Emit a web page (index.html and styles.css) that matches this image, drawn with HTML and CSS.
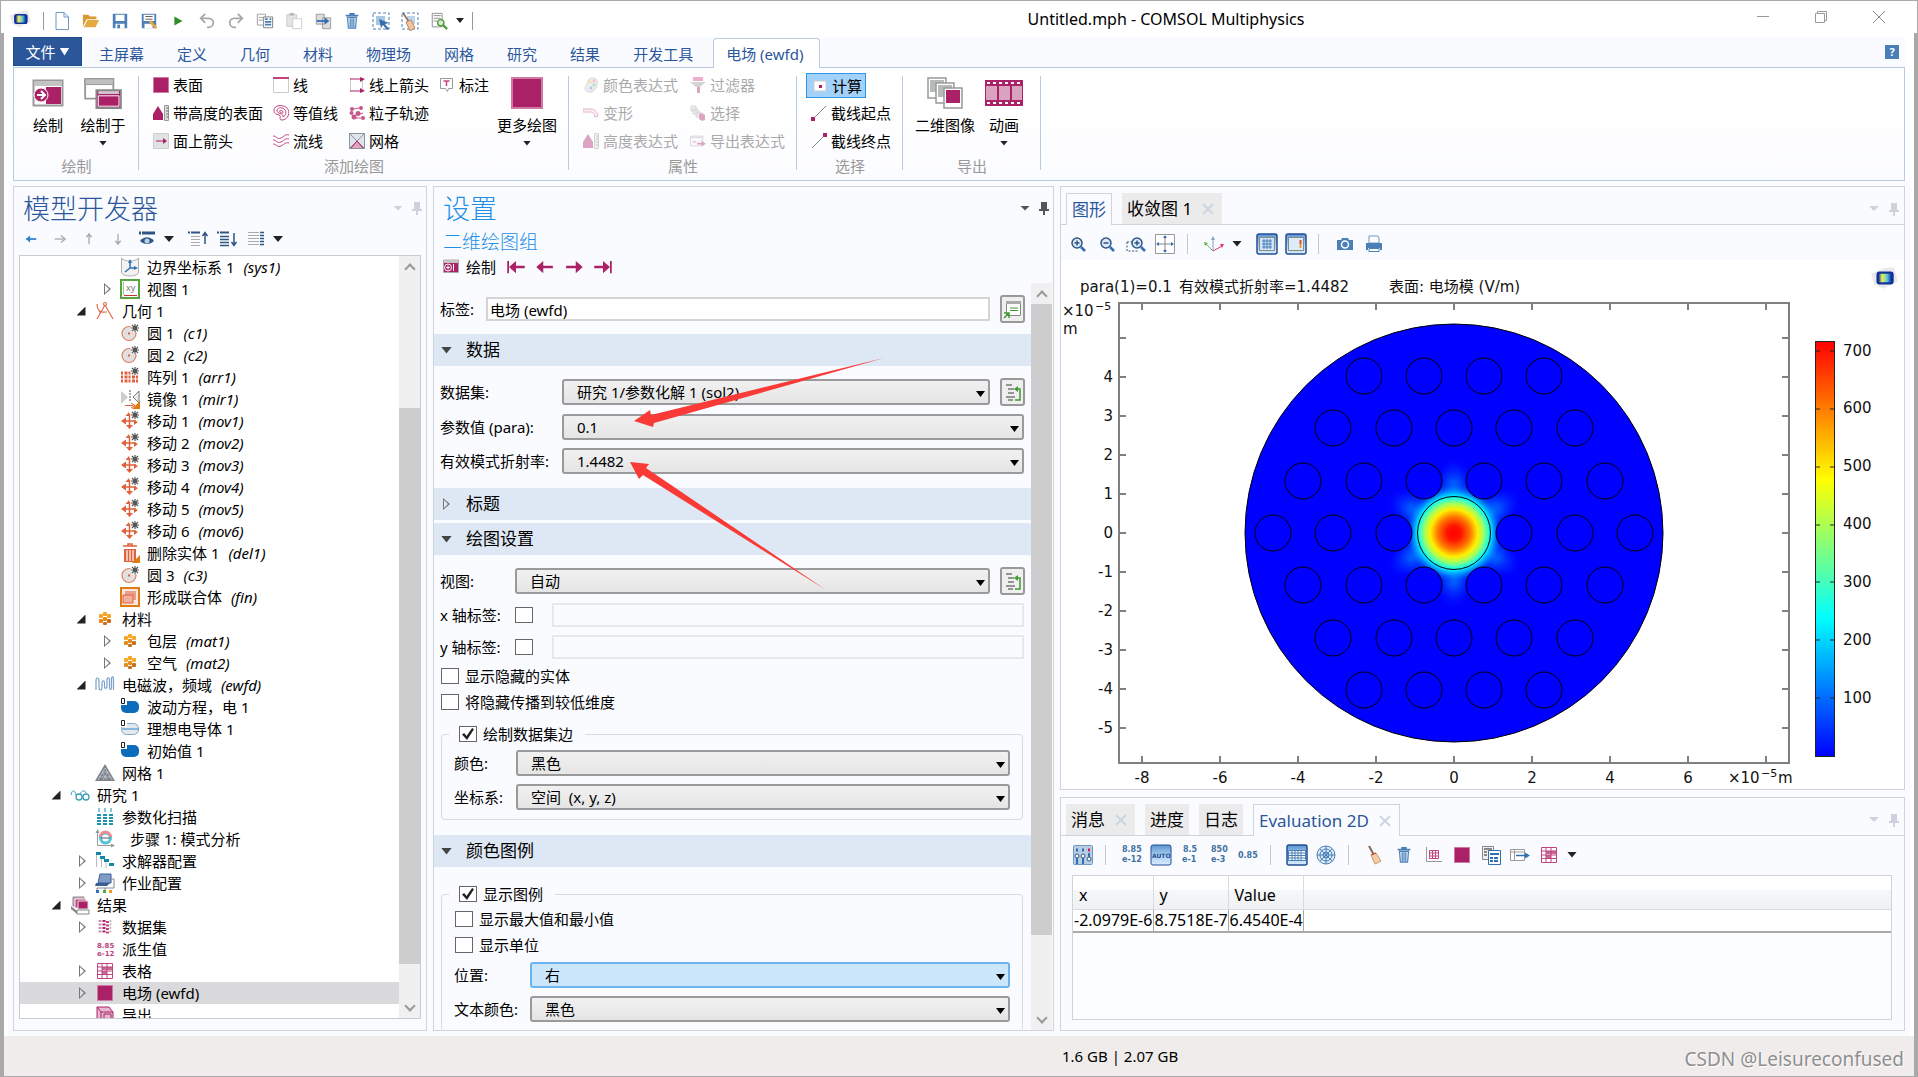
FILE: index.html
```html
<!DOCTYPE html>
<html lang="zh-CN">
<head>
<meta charset="utf-8">
<title>Untitled.mph - COMSOL Multiphysics</title>
<link rel="stylesheet" href="styles.css">
</head>
<body>
<svg class="sprite" aria-hidden="true">
  <defs>
    <linearGradient id="g-logo" x1="0" x2="1"><stop offset="0" stop-color="#12309a"/><stop offset=".25" stop-color="#e8ee5a"/><stop offset=".5" stop-color="#a8dc8a"/><stop offset=".7" stop-color="#47b9e8"/><stop offset="1" stop-color="#0d2a8c"/></linearGradient>
    <linearGradient id="g-pressed" x1="0" x2="0" y1="0" y2="1"><stop offset="0" stop-color="#5c94cf"/><stop offset=".5" stop-color="#a9cdf0"/><stop offset="1" stop-color="#d8ecff"/></linearGradient>
  </defs>
  <symbol id="i-logo" viewBox="0 0 26 20"><path d="M1 6l12-5 9-1 4 13-10 5-3 2-9-4z" fill="#e9e9ec"/><rect x="6" y="4" width="16" height="12" rx="3" fill="#12309a"/><rect x="8" y="6" width="12" height="8" rx="1" fill="url(#g-logo)"/></symbol>
  <symbol id="i-new" viewBox="0 0 20 20"><path d="M4 1.500h8l4.500 4.500v12.500H4z" fill="#fff" stroke="#6f98c4"/><path d="M12 1.500V6h4.500" fill="none" stroke="#6f98c4"/></symbol>
  <symbol id="i-open" viewBox="0 0 20 20"><path d="M1 3h6l2 2h7v3H5L1 16z" fill="#d99a35"/><path d="M6 9h13l-4 8H2z" fill="#e5a941"/></symbol>
  <symbol id="i-save" viewBox="0 0 20 20"><path d="M2 2h16v16H2z" fill="#4a7fb8"/><path d="M5 3h10v7H5zM5 13h10v5H5z" fill="#fff"/><path d="M7 14h3v4H7z" fill="#4a7fb8"/></symbol>
  <symbol id="i-saveas" viewBox="0 0 20 20"><path d="M2 2h16v16H2z" fill="#4a7fb8"/><path d="M4 3h12v7H4zM5 13h9v5H5z" fill="#fff"/><path d="M6 5h8M6 8h8" stroke="#555"/><path d="M11 10l7 8" stroke="#e5a941" stroke-width="3"/></symbol>
  <symbol id="i-run" viewBox="0 0 20 20"><path d="M6 5l9 5-9 5z" fill="#2f8f2a"/></symbol>
  <symbol id="i-undo" viewBox="0 0 20 20"><path d="M4 7h8a4.500 4.500 0 010 10h-2" fill="none" stroke="#a8a8a8" stroke-width="2"/><path d="M8 2L3 7l5 5" fill="none" stroke="#a8a8a8" stroke-width="2"/></symbol>
  <symbol id="i-redo" viewBox="0 0 20 20"><path d="M16 7H8a4.500 4.500 0 000 10h2" fill="none" stroke="#a8a8a8" stroke-width="2"/><path d="M12 2l5 5-5 5" fill="none" stroke="#a8a8a8" stroke-width="2"/></symbol>
  <symbol id="i-copy" viewBox="0 0 20 20"><path d="M1.500 2.500h9v12h-9z" fill="#fff" stroke="#999"/><path d="M3 6h5M3 9h5" stroke="#999"/><path d="M8.500 5.500h10v12h-10z" fill="#fff" stroke="#777"/><path d="M10 8h3M10 11h7M10 14h7M15 8h2" stroke="#4a7fb8" stroke-width="2"/></symbol>
  <symbol id="i-paste" viewBox="0 0 20 20"><path d="M2 3h11v13H2z" fill="#e3e3e3" stroke="#ccc"/><path d="M5 1h5v3H5z" fill="#bbb"/><path d="M8.500 7.500h10v11h-10z" fill="#fff" stroke="#ccc"/></symbol>
  <symbol id="i-dup" viewBox="0 0 20 20"><path d="M2.500 2.500h9v11h-9zM9.500 6.500h9v12h-9z" fill="#ddd" stroke="#999"/><path d="M3 10h12" stroke="#2f6fb4" stroke-width="2"/><path d="M12 6l5 4-5 4z" fill="#2f6fb4"/></symbol>
  <symbol id="i-trash" viewBox="0 0 20 20"><path d="M3 4h14M8 4V2h4v2" fill="none" stroke="#4a7fb8" stroke-width="2"/><path d="M5 6h10l-1 12H6zM8 7v10M10 7v10M12 7v10" fill="#e8f1fa" stroke="#4a7fb8" stroke-width="1.300"/></symbol>
  <symbol id="i-select" viewBox="0 0 20 20"><path d="M2 2h16v16H2z" fill="none" stroke="#4a7fb8" stroke-dasharray="3 2"/><path d="M5 5h9v9H5z" fill="#a9c6e3"/><path d="M8 8l10 4-4 1 4 5-2 1-4-5-2 3z" fill="#3a6ea8"/></symbol>
  <symbol id="i-clearsel" viewBox="0 0 20 20"><path d="M2 2h16v16H2z" fill="none" stroke="#4a7fb8" stroke-dasharray="3 2"/><path d="M7 5h8v8H7z" fill="#bcd3ea"/><path d="M3 2l6 9" stroke="#8a6a52" stroke-width="1.500"/><path d="M6 11l5-2 4 8-5 3z" fill="#f1c49a" stroke="#b98a66"/></symbol>
  <symbol id="i-find" viewBox="0 0 20 20"><path d="M2.500 1.500h11v15h-11z" fill="#fff" stroke="#888"/><path d="M4 4h8M4 7h8M4 10h4" stroke="#888"/><circle cx="12" cy="12" r="3.500" fill="#d6ecd0" stroke="#4f9a3a" stroke-width="1.500"/><path d="M14.500 14.500L19 19" stroke="#4f9a3a" stroke-width="2.500"/></symbol>

  <symbol id="i-plot" viewBox="0 0 32 28"><path d="M1.500 1.500h29v25h-29z" fill="#fff" stroke="#999" stroke-width="2"/><path d="M2 2h28v5H2z" fill="#c4c4c4"/><path d="M14 8h15v17H14z" fill="#ab2168"/><circle cx="9" cy="16" r="7" fill="#ab2168" stroke="#fff"/><path d="M5 16h7M9 12l4 4-4 4" fill="none" stroke="#fff" stroke-width="2"/></symbol>
  <symbol id="i-plotin" viewBox="0 0 42 34"><path d="M2 2h30v21H2z" fill="#fff" stroke="#999" stroke-width="2"/><path d="M2 2h30v6H2z" fill="#c0c0c0" stroke="#999"/><path d="M14 14h26v19H14z" fill="#ab2168" stroke="#888" stroke-width="2"/><path d="M16 15h22v3H16z" fill="#ccc"/><path d="M16 20h22v11H16z" fill="none" stroke="#fff"/></symbol>
  <symbol id="i-plots" viewBox="0 0 16 16"><path d="M.5 1h15v12.500H.5z" fill="#fff" stroke="#aaa"/><path d="M1 1h14v3H1z" fill="#c4c4c4"/><path d="M1 4h14v9H1z" fill="#ab2168"/><circle cx="5" cy="8.500" r="3.500" fill="#ab2168" stroke="#fff"/><path d="M3 8.500h4M5 6.500v4M10.500 5v7" stroke="#fff"/></symbol>
  <symbol id="i-surface" viewBox="0 0 16 16"><path d="M.5.5h15v15H.5z" fill="#ab2168" stroke="#cf7aa5"/></symbol>
  <symbol id="i-height" viewBox="0 0 16 16"><path d="M0 15V9l5-8 5 8v6z" fill="#ab2168"/><path d="M11.500.5h4v15h-4z" fill="#ddd" stroke="#999"/><path d="M13 3h3M13 6h3M13 9h3M13 12h3" stroke="#777"/></symbol>
  <symbol id="i-arrowsurf" viewBox="0 0 16 16"><path d="M.5.5h15v15H.5z" fill="#dfe3e3" stroke="#ccc"/><path d="M3 8h8" stroke="#ab2168"/><path d="M10 5l4 3-4 3z" fill="#ab2168"/></symbol>
  <symbol id="i-line" viewBox="0 0 16 16"><path d="M.5 1h15v14.500H.5z" fill="#fff" stroke="#ccc"/><path d="M0 1h16" stroke="#c0447f" stroke-width="2"/></symbol>
  <symbol id="i-contour" viewBox="0 0 16 16"><g fill="none" stroke="#c0447f"><path d="M1 5c0-5 9-6 13-2s1 12-5 12C5 15 9 11 6 10S1 9 1 5z"/><path d="M4 5c1-3 6-3 8 0s0 6-2 7c1-4-7-3-6-7z"/><path d="M6.500 6c1-1 3-1 3.500 1s-3 1-3.500-1z"/></g></symbol>
  <symbol id="i-stream" viewBox="0 0 16 16"><g fill="none" stroke="#c0447f"><path d="M0 3c4 0 4 4 8 2s4-4 8-3M0 7c4 0 4 4 8 2s4-4 8-3M0 11c4 0 4 4 8 2s4-4 8-3"/></g></symbol>
  <symbol id="i-linearrow" viewBox="0 0 16 16"><path d="M1.500 1v14" stroke="#ccc"/><path d="M13.500 2v12" stroke="#ccc"/><path d="M1 2h11M1 14h11" stroke="#ab2168"/><path d="M11 0l5 2-5 3zM11 11l5 3-5 2z" fill="#ab2168"/></symbol>
  <symbol id="i-particle" viewBox="0 0 16 16"><g fill="#c8568c"><circle cx="3" cy="4" r="2"/><circle cx="2.500" cy="8" r="2"/><circle cx="5" cy="12" r="2.500"/><circle cx="9" cy="8.500" r="2.500"/><circle cx="12" cy="3" r="2"/><circle cx="14" cy="13" r="2"/></g><path d="M5 4l5-1M11 9l3-1M7 13l5 0" stroke="#c8568c"/></symbol>
  <symbol id="i-mesh" viewBox="0 0 16 16"><path d="M.5.5h15v15H.5z" fill="#dfe5ea" stroke="#8a949e"/><path d="M1 15l7-7 7 7z" fill="#e2a5c3"/><path d="M.5.5l15 15M15.500.5l-15 15" stroke="#8a949e"/><path d="M2 15l6-7 6 7" fill="none" stroke="#ab2168"/></symbol>
  <symbol id="i-note" viewBox="0 0 16 16"><path d="M1.500 1.500h12v10h-4l-1 3-2-3h-5z" fill="#fff" stroke="#999"/><path d="M4.500 4h6M7.500 4v5" stroke="#c0447f" stroke-width="1.500"/></symbol>
  <symbol id="i-palette" viewBox="0 0 16 16"><path d="M9 1c5 0 6 3 5 7s-4 8-8 7-5-4-3-6 1-8 6-8z" fill="#d4d4d4" stroke="#999"/><circle cx="7" cy="5" r="1.500" fill="#e9b020"/><circle cx="11" cy="4" r="1.500" fill="#f06a6a"/><circle cx="11" cy="8" r="1.500" fill="#3fc05a"/><circle cx="8" cy="11" r="1.500" fill="#3f78e8"/></symbol>
  <symbol id="i-deform" viewBox="0 0 16 16"><path d="M0 4h8c4 0 6 3 7 7l-3 1c-1-4-2-5-5-5H0z" fill="#f4dbe7" stroke="#c0447f"/></symbol>
  <symbol id="i-filter" viewBox="0 0 16 16"><path d="M3 0h10v4H3z" fill="#d63a86"/><path d="M0 5h16l-6 5H6z" fill="#999"/><path d="M7 10h3v6H7z" fill="#ab2168"/></symbol>
  <symbol id="i-pick" viewBox="0 0 16 16"><path d="M1 1h5v5H1zM3 4h5v5H3zM6 7h5v5H6z" fill="#ddd" stroke="#999"/><path d="M9 9l3-1 3 2v5l-3 1-3-2z" fill="#ab2168"/></symbol>
  <symbol id="i-expr" viewBox="0 0 18 16"><path d="M.5 2.500h14v11H.5z" fill="#f2f2f2" stroke="#999"/><path d="M1 4h13" stroke="#999"/><path d="M3 9h4" stroke="#ab2168"/><path d="M8 11h6" stroke="#ab2168" stroke-width="2"/><path d="M13 8l5 3-5 3z" fill="#ab2168"/></symbol>
  <symbol id="i-calc" viewBox="0 0 16 16"><path d="M2 3h12v10H2z" fill="#fff" stroke="#ccc"/><path d="M7 7h3v3H7z" fill="#ab2168"/></symbol>
  <symbol id="i-cutstart" viewBox="0 0 16 16"><path d="M1 15L15 1" stroke="#888"/><path d="M0 12h4v4H0z" fill="#ab2168"/></symbol>
  <symbol id="i-cutend" viewBox="0 0 16 16"><path d="M1 15L15 1" stroke="#888"/><path d="M12 0h4v4h-4z" fill="#ab2168"/></symbol>
  <symbol id="i-images" viewBox="0 0 38 32"><g fill="#fff" stroke="#999" stroke-width="1.500"><path d="M2 1h18v20H2z"/><path d="M4 3h14v12H4z" fill="#b5bbb9" stroke="none"/><path d="M10 6h18v20H10z"/><path d="M12 8h14v12H12z" fill="#b5bbb9" stroke="none"/><path d="M18 11h18v20H18z"/></g><path d="M20 13h14v13H20z" fill="#ab2168"/></symbol>
  <symbol id="i-film" viewBox="0 0 38 26"><path d="M0 0h38v26H0z" fill="#ab2168"/><path d="M1 6h11v14H1zM14 6h11v14H14zM27 6h10v14H27z" fill="#d9a3bf"/><path d="M2 3h36M2 23h36" stroke="#fff" stroke-width="2" stroke-dasharray="3 3"/></symbol>

  <symbol id="i-left" viewBox="0 0 16 16"><path d="M3 8h11" stroke="currentColor" stroke-width="2"/><path d="M7 4L2 8l5 4z" fill="currentColor"/></symbol>
  <symbol id="i-right" viewBox="0 0 16 16"><path d="M2 8h11" stroke="currentColor" stroke-width="1.500"/><path d="M9 4l5 4-5 4" fill="none" stroke="currentColor" stroke-width="1.500"/></symbol>
  <symbol id="i-up" viewBox="0 0 16 16"><path d="M8 14V3M5 6l3-4 3 4" fill="none" stroke="currentColor" stroke-width="1.500"/></symbol>
  <symbol id="i-down" viewBox="0 0 16 16"><path d="M8 2v11M5 10l3 4 3-4" fill="none" stroke="currentColor" stroke-width="1.500"/></symbol>
  <symbol id="i-eye" viewBox="0 0 18 16"><path d="M1 2h2M4 2h13" stroke="#2f5582" stroke-width="3"/><path d="M2 10c4-5 10-5 14 0-4 4-10 4-14 0z" fill="#2f5582"/><circle cx="9" cy="10" r="2.500" fill="#b8d0ea"/></symbol>
  <symbol id="i-collapse" viewBox="0 0 20 16"><path d="M0 1.500h12" stroke="#2f5582" stroke-width="2" stroke-dasharray="2 1 20"/><path d="M3 5.500h9M3 8.500h9M3 11.500h9M3 14.500h9" stroke="#aaa"/><path d="M17 13V2M14.500 5L17 1.500 19.500 5" fill="none" stroke="#2f5582" stroke-width="1.500"/></symbol>
  <symbol id="i-expand" viewBox="0 0 20 16"><path d="M0 1.500h12" stroke="#2f5582" stroke-width="2" stroke-dasharray="2 1 20"/><path d="M3 5.500h9M3 8.500h9M3 11.500h9M3 14.500h9" stroke="#2f5582" stroke-width="1.500"/><path d="M17 2v12M14.500 11l2.500 3.500 2.500-3.500" fill="none" stroke="#2f5582" stroke-width="1.500"/></symbol>
  <symbol id="i-cols" viewBox="0 0 18 16"><path d="M1 1.500h11M1 4.500h11M1 7.500h11M1 10.500h11M1 13.500h11" stroke="#aaa"/><path d="M13 1.500h4M13 4.500h4M13 7.500h4M13 10.500h4M13 13.500h4" stroke="#2f5582" stroke-width="1.500"/></symbol>
  <symbol id="i-pin" viewBox="0 0 10 14"><path d="M2 1h6v7h2v2H0V8h2zM4 10h2v4H4z" fill="currentColor"/></symbol>
  <symbol id="i-x" viewBox="0 0 12 12"><path d="M1 1l10 10M11 1L1 11" stroke="currentColor" stroke-width="2"/></symbol>

  <symbol id="t-sys" viewBox="0 0 20 20"><path d="M1.500 1c3 4 14 4 17 0v15c-3 4-14 4-17 0z" fill="#f3f3f3" stroke="#b0b0b0"/><path d="M10 4v7h6M10 11l-5 4" fill="none" stroke="#2f6fb4" stroke-width="1.500"/><path d="M8 6l2-4 2 4zM14 9l4 2-4 2z" fill="#2f6fb4"/></symbol>
  <symbol id="t-view" viewBox="0 0 20 20"><path d="M1 1h18v18H1z" fill="#fff" stroke="#55a63f" stroke-width="2"/><path d="M3.500 3v13" stroke="#9c9"/><path d="M4 16.500h13" stroke="#c33"/><text x="6" y="12" font-size="9" fill="#777">xy</text></symbol>
  <symbol id="t-geom" viewBox="0 0 20 20"><g fill="none" stroke="#e0694a" stroke-width="1.200"><path d="M10 4L2 18M10 4l8 14M4 11h8M2 3c0 6 3 9 8 8"/><circle cx="10" cy="3" r="1.500"/></g></symbol>
  <symbol id="t-star" viewBox="0 0 8 8"><path d="M4 0v8M0 4h8M1 1l6 6M7 1L1 7" stroke="#555" stroke-width="1.200"/><circle cx="4" cy="4" r="2" fill="#555"/></symbol>
  <symbol id="t-circle" viewBox="0 0 20 20"><circle cx="9" cy="10.500" r="7" fill="#e0e0e0" stroke="#e0805f" stroke-width="1.200"/><path d="M10 1h10v8h-8z" fill="#fff"/><path d="M8 9.500h2v2H8z" fill="#e0603a"/><use href="#t-star" x="11" y="1" width="8" height="8"/></symbol>
  <symbol id="t-array" viewBox="0 0 20 20"><path d="M1 6h11M1 10h18M1 14h18" stroke="#e0603a" stroke-width="3" stroke-dasharray="2 1.500 3 1"/><use href="#t-star" x="11" y="0" width="8" height="8"/></symbol>
  <symbol id="t-mirror" viewBox="0 0 20 20"><path d="M1 2l7 6-7 7z" fill="#ccc"/><path d="M19 2l-6 6 6 6z" fill="#eee" stroke="#777"/><path d="M10 1v12" stroke="#555" stroke-dasharray="2 1"/><path d="M5 16.500h8M11 14l4 2.500-4 2.500" fill="none" stroke="#e0603a"/><path d="M20 12v8h-8z" fill="#e07b12"/></symbol>
  <symbol id="t-move" viewBox="0 0 20 20"><path d="M3 10h13M9.500 3v13" stroke="#e0603a" stroke-width="1.500"/><path d="M1 10l5-3.500v7zM9.500 18L6 14h7zM18 11l-4-2v5zM9 1L5.500 5H10z" fill="#e0603a"/><path d="M11 0h9v8h-9z" fill="#fff"/><use href="#t-star" x="11" y="0" width="8" height="8"/></symbol>
  <symbol id="t-delete" viewBox="0 0 20 20"><path d="M3 3h14M8 3V1h4v2" fill="none" stroke="#e0603a" stroke-width="1.500"/><path d="M4 6h12v13H4z" fill="#e0603a"/><path d="M7 7v11M10 7v11M13 7v11" stroke="#fff" stroke-width="1.200"/><path d="M20 12v8h-8z" fill="#e07b12"/></symbol>
  <symbol id="t-union" viewBox="0 0 20 20"><path d="M1 1h18v18H1z" fill="#fde6df" stroke="#e07b12" stroke-width="2"/><path d="M5 4h11v9H5z" fill="#eba08c"/><path d="M3 8h10v8H3z" fill="#f0b09f" stroke="#e0603a"/></symbol>
  <symbol id="t-mat" viewBox="0 0 20 20"><g fill="#f5a623"><rect x="8" y="3" width="4" height="4" rx="1"/><rect x="4" y="5" width="4" height="4" rx="1"/><rect x="12" y="5" width="4" height="4" rx="1"/></g><g fill="#e8891a"><rect x="8" y="8" width="4" height="4" rx="1"/><rect x="4" y="10" width="4" height="4" rx="1"/><rect x="12" y="10" width="4" height="4" rx="1" fill="#c9701a"/><rect x="8" y="13" width="4" height="3" rx="1" fill="#c9701a"/></g></symbol>
  <symbol id="t-wave" viewBox="0 0 20 20"><path d="M1 15V6c0-4 3-4 3 0v6c0 4 3 4 3 0V8c0-3 2.500-3 2.500 0v3c0 3 2.500 3 2.500 0V5c0-3 2.500-3 2.500 0v8c0 2 2 2 2 0V3c1-2 2-1 2 1v11" fill="none" stroke="#7a9fcc" stroke-width="1.200"/></symbol>
  <symbol id="t-domain" viewBox="0 0 20 20"><rect x="1" y="4" width="18" height="12" rx="5" fill="#0b6cbc"/><path d="M0 0h7v8H0z" fill="#fff"/><path d="M1.500 1.500h3v5h-3z" fill="none" stroke="#222"/></symbol>
  <symbol id="t-pec" viewBox="0 0 20 20"><rect x="1.500" y="4.500" width="17" height="11" rx="5" fill="#e4e8ea" stroke="#7fa8cc"/><path d="M2 10h17" stroke="#2f86cc"/><path d="M0 0h7v8H0z" fill="#fff"/><path d="M1.500 1.500h3v5h-3z" fill="none" stroke="#222"/></symbol>
  <symbol id="t-mesh" viewBox="0 0 20 20"><path d="M10 1l10 17H0z" fill="#7d838b"/><path d="M4 14h12M7 9h6M3 17l7-12M17 17L10 5M8 17l5-8M12 17L7 9" stroke="#d6dadf" stroke-width=".6"/></symbol>
  <symbol id="t-study" viewBox="0 0 20 20"><path d="M1 10c1-6 4-5 5 0" fill="none" stroke="#3a9db5"/><circle cx="9" cy="12" r="3" fill="none" stroke="#3a9db5" stroke-width="1.300"/><circle cx="16" cy="12" r="3" fill="none" stroke="#3a9db5" stroke-width="1.300"/><path d="M10 9c2-4 5-4 6-1" fill="none" stroke="#3a9db5"/></symbol>
  <symbol id="t-sweep" viewBox="0 0 20 20"><path d="M4 7v12M10 7v12M16 7v12" stroke="#1d93ad" stroke-width="4" stroke-dasharray="2 1"/><path d="M4 1v4M10 1v4M16 1v4" stroke="#5fb3c4" stroke-width="1.500"/></symbol>
  <symbol id="t-mode" viewBox="0 0 20 20"><path d="M2.500 2v14.500H18" fill="none" stroke="#999"/><path d="M2.500 0l2 4h-4zM20 16.500l-4-2v4z" fill="#999"/><circle cx="10.500" cy="9" r="5" fill="#fff" stroke="#4fc3d6" stroke-width="3"/><path d="M5.500 8a5 5 0 0110 0" fill="none" stroke="#f08a94" stroke-width="3"/><path d="M6 9h9" stroke="#557"/></symbol>
  <symbol id="t-solver" viewBox="0 0 20 20"><path d="M1.500 3v13M6.500 7v9M11 11v6" stroke="#bbb"/><path d="M1 1h5v3H1zM5 5h5v3H5zM9 8h5v3H9zM14 12h5v3h-5z" fill="#0f8ba8"/></symbol>
  <symbol id="t-job" viewBox="0 0 20 20"><path d="M5 1h11v9H3z" fill="#7e9cc6" stroke="#3a5f94"/><path d="M1 10h14l-3 3H0z" fill="#3a5f94"/><path d="M16 6h3v9H2v2M10 15v2" fill="none" stroke="#888"/><path d="M1 17h3v3H1z" fill="#2f6fb4"/><path d="M8 17h3v3H8z" fill="#4fa83a"/><path d="M14 17h3v3h-3z" fill="#f09a1a"/></symbol>
  <symbol id="t-results" viewBox="0 0 20 20"><path d="M3 2h11v9H3z" fill="#d9a3bf" stroke="#888"/><path d="M5 4h11v9H5z" fill="#c0447f" stroke="#eee"/><path d="M8 6h10v8H8z" fill="#ab2168" stroke="#ddd"/><path d="M1 11l6 5v3l-6-5z" fill="#888"/><path d="M7 15h12v4H7z" fill="#fff" stroke="#888"/></symbol>
  <symbol id="t-data" viewBox="0 0 20 20"><g stroke-width="3" stroke-dasharray="2 1.500"><path d="M5 3v14" stroke="#c88fae"/><path d="M9 3v14" stroke="#ab2168"/><path d="M12.500 4v14" stroke="#c0447f"/><path d="M15.500 3v14" stroke="#b0b0b0" stroke-width="1.500"/></g></symbol>
  <symbol id="t-table" viewBox="0 0 20 20"><path d="M2.500 2.500h15v15h-15z" fill="#fff" stroke="#c0447f"/><path d="M7 6h10v3H7zM7 10h5v3H7z" fill="#c76a98"/><path d="M2 6h16M2 10h16M2 13.500h16M7 2v16M12 2v16" stroke="#c0447f"/></symbol>
  <symbol id="t-surface" viewBox="0 0 20 20"><path d="M2.500 2.500h15v15h-15z" fill="#ab2168" stroke="#cf7aa5"/></symbol>
  <symbol id="t-export" viewBox="0 0 20 20"><path d="M2 2h12l4 5v12H5L2 15z" fill="#e6b8cf" stroke="#ab2168"/><path d="M2 2l4 5h12M6 7v12M9 9h7v6H9z" fill="none" stroke="#ab2168"/></symbol>

  <symbol id="i-zoomin" viewBox="0 0 16 16"><circle cx="7" cy="7" r="5" fill="#dbe8f5" stroke="#2f5582" stroke-width="1.500"/><path d="M4.500 7h5M7 4.500v5" stroke="#2f5582" stroke-width="1.500"/><path d="M11 11l4 4" stroke="#2f6fb4" stroke-width="2.500"/></symbol>
  <symbol id="i-zoomout" viewBox="0 0 16 16"><circle cx="7" cy="7" r="5" fill="#dbe8f5" stroke="#2f5582" stroke-width="1.500"/><path d="M4.500 7h5" stroke="#2f5582" stroke-width="1.500"/><path d="M11 11l4 4" stroke="#2f6fb4" stroke-width="2.500"/></symbol>
  <symbol id="i-zoombox" viewBox="0 0 20 16"><path d="M1 6h6M1 6v9h11" fill="none" stroke="#2f5582" stroke-dasharray="2 1.500"/><circle cx="11" cy="7" r="5" fill="#dbe8f5" stroke="#2f5582" stroke-width="1.500"/><path d="M8.500 7h5M11 4.500v5" stroke="#2f5582" stroke-width="1.500"/><path d="M15 11l4 4" stroke="#2f6fb4" stroke-width="2.500"/></symbol>
  <symbol id="i-fit" viewBox="0 0 20 20"><path d="M.5.5h19v19H.5z" fill="#fff" stroke="#999"/><path d="M10 3v14M3 10h14" stroke="#888"/><path d="M10 1L8 4h4zM10 19l-2-3h4zM1 10l3-2v4zM19 10l-3-2v4z" fill="#2f6fb4"/></symbol>
  <symbol id="i-axes" viewBox="0 0 20 16"><path d="M9 15V2" stroke="#7fa3c9"/><path d="M9 15L2 8" stroke="#6ab04c"/><path d="M9 15l9-5" stroke="#e0346e"/><path d="M0 6l4 1-3 3z" fill="#6ab04c"/><path d="M9 0L7 4h4z" fill="#7fa3c9"/><path d="M20 8h-4l2 4z" fill="#e0346e"/></symbol>
  <symbol id="i-gridon" viewBox="0 0 22 22"><rect x="1" y="1" width="20" height="20" rx="2" fill="url(#g-pressed)" stroke="#234f94" stroke-width="1.500"/><path d="M3.500 4.500h15v13h-15z" fill="#cfe5fa" stroke="#888"/><path d="M6 8h10M6 11h10M6 14h10M8 6v10M11 6v10M14 6v10" stroke="#4a7fb8"/></symbol>
  <symbol id="i-legendon" viewBox="0 0 22 22"><rect x="1" y="1" width="20" height="20" rx="2" fill="url(#g-pressed)" stroke="#234f94" stroke-width="1.500"/><path d="M3.500 4.500h15v13h-15z" fill="#dcecfb" stroke="#888"/><path d="M15.500 7v4" stroke="#e24a2a" stroke-width="2"/><path d="M15.500 11v4" stroke="#f0a020" stroke-width="2"/></symbol>
  <symbol id="i-camera" viewBox="0 0 16 14"><path d="M0 3h4l1-2h6l1 2h4v10H0z" fill="#4a7fb8"/><circle cx="8" cy="7.500" r="3.500" fill="#4a7fb8" stroke="#fff" stroke-width="1.500"/></symbol>
  <symbol id="i-print" viewBox="0 0 16 18"><path d="M3 1h9l1 2v5H3z" fill="#fff" stroke="#6f98c4"/><path d="M0 8h16v7h-2v-2H2v2H0z" fill="#4a7fb8"/><path d="M3 13.500h10v3H3z" fill="#fff" stroke="#4a7fb8"/></symbol>

  <symbol id="i-precision" viewBox="0 0 20 20"><rect x=".5" y=".5" width="19" height="19" rx="1" fill="#b9cde2" stroke="#6f98c4"/><path d="M3 5h2M9 5h2" stroke="#2f6fb4" stroke-width="3"/><path d="M15 5h2" stroke="#d02060" stroke-width="3"/><circle cx="4" cy="11" r="2" fill="#fff" stroke="#2f5582"/><circle cx="10" cy="11" r="2" fill="#fff" stroke="#2f5582"/><circle cx="16" cy="14" r="2" fill="#fff" stroke="#2f5582"/><path d="M4 13v6M10 13v6M16 8v4" stroke="#2f6fb4" stroke-width="2"/></symbol>
  <symbol id="i-tableon" viewBox="0 0 22 22"><rect x="1" y="1" width="20" height="20" rx="2" fill="url(#g-pressed)" stroke="#234f94" stroke-width="1.500"/><path d="M2.500 6.500h17v10h-17z" fill="#fff" stroke="#4a7fb8"/><path d="M3 9h16M3 11.500h16M3 14h16M6 6v10M9 6v10M12 6v10M15 6v10" stroke="#4a7fb8"/></symbol>
  <symbol id="i-polar" viewBox="0 0 20 20"><g fill="#dce9f6" stroke="#4a7fb8"><circle cx="10" cy="10" r="9"/><circle cx="10" cy="10" r="6"/><circle cx="10" cy="10" r="3"/><path d="M10 1v18M1 10h18M4 4l12 12M16 4L4 16"/></g></symbol>
  <symbol id="i-broom" viewBox="0 0 20 20"><path d="M4 1l5 9" stroke="#8a6a52" stroke-width="2"/><path d="M6 10l5-2 5 8-6 3z" fill="#f3cba4" stroke="#c29a74"/><path d="M6 10l5-2" stroke="#c0392b"/></symbol>
  <symbol id="i-tgraph" viewBox="0 0 20 20"><path d="M3.500 2v14.500H19" fill="none" stroke="#999"/><path d="M6.500 5.500h9v8h-9z" fill="#fff" stroke="#c0447f"/><path d="M6 8h10M6 11h10M9.500 5v9M12.500 5v9" stroke="#c0447f"/></symbol>
  <symbol id="i-tcopy" viewBox="0 0 20 20"><path d="M1.500 1.500h11v13h-11z" fill="#eee" stroke="#888"/><path d="M3 4h8M3 7h3M3 10h3" stroke="#888" stroke-width="2"/><path d="M7.500 5.500h12v14h-12z" fill="#fff" stroke="#2f6fb4"/><path d="M9 9h9M9 13h3M13 13h4M9 16h3M13 16h4" stroke="#2f6fb4" stroke-width="2"/></symbol>
  <symbol id="i-texport" viewBox="0 0 20 20"><path d="M.5 4.500h14v11H.5z" fill="#fff" stroke="#999"/><path d="M1 7h13M4.500 5v10" stroke="#999"/><path d="M6 10.500h10" stroke="#2f6fb4" stroke-width="1.500"/><path d="M15 7.500l5 3-5 3z" fill="#2f6fb4"/></symbol>
  <symbol id="i-goto" viewBox="0 0 20 20"><path d="M3.500 2.500h14v14h-14z" fill="#fff" stroke="#888"/><path d="M3 2h15v3H3z" fill="#aaa"/><path d="M7 9h8M7 11.500h8" stroke="#3c9a2f"/><path d="M1 14h5v5M6 14l-5 5" fill="none" stroke="#3c9a2f" stroke-width="1.500"/></symbol>
  <symbol id="i-source" viewBox="0 0 20 20"><path d="M3 3h6M5 7h6M5 11h6M3 15h9M5 18h5" stroke="#777" stroke-width="1.500"/><path d="M12 18h5V7h-4" fill="none" stroke="#3c9a2f" stroke-width="1.500"/><path d="M11 7l4-3v6z" fill="#3c9a2f"/></symbol>
  <symbol id="i-first" viewBox="0 0 20 16"><path d="M0 1h2v14H0zM2 8l8-7v5.500h10v3H10V15z" fill="#ab2168"/></symbol>
  <symbol id="i-prev" viewBox="0 0 20 16"><path d="M0 8l8-7v5.500h11v3H8V15z" fill="#ab2168"/></symbol>
  <symbol id="i-next" viewBox="0 0 20 16"><path d="M20 8l-8-7v5.500H1v3h11V15z" fill="#ab2168"/></symbol>
  <symbol id="i-last" viewBox="0 0 20 16"><path d="M20 1h-2v14h2zM18 8l-8-7v5.500H0v3h10V15z" fill="#ab2168"/></symbol>
</svg>

<div class="window">
  <header class="titlebar">
    <svg class="app-logo" width="22" height="18"><use href="#i-logo"/></svg>
    <div class="quick">
      <span class="bar"></span>
      <button aria-label="新建"><svg width="20" height="20"><use href="#i-new"/></svg></button>
      <button aria-label="打开"><svg width="18" height="18"><use href="#i-open"/></svg></button>
      <button aria-label="保存"><svg width="18" height="18"><use href="#i-save"/></svg></button>
      <button aria-label="另存为"><svg width="18" height="18"><use href="#i-saveas"/></svg></button>
      <button aria-label="运行"><svg width="18" height="18"><use href="#i-run"/></svg></button>
      <button aria-label="撤消"><svg width="18" height="18"><use href="#i-undo"/></svg></button>
      <button aria-label="重做"><svg width="18" height="18"><use href="#i-redo"/></svg></button>
      <button aria-label="复制"><svg width="18" height="18"><use href="#i-copy"/></svg></button>
      <button aria-label="粘贴"><svg width="18" height="18"><use href="#i-paste"/></svg></button>
      <button aria-label="生成副本"><svg width="18" height="18"><use href="#i-dup"/></svg></button>
      <button aria-label="删除"><svg width="18" height="18"><use href="#i-trash"/></svg></button>
      <button aria-label="全选"><svg width="20" height="20"><use href="#i-select"/></svg></button>
      <button aria-label="清除选择"><svg width="20" height="20"><use href="#i-clearsel"/></svg></button>
      <button aria-label="查找"><svg width="18" height="18"><use href="#i-find"/></svg></button>
      <button class="drop" aria-label="自定义"><span class="tri small"></span></button>
      <span class="bar"></span>
    </div>
    <h1 class="title">Untitled.mph - COMSOL Multiphysics</h1>
    <div class="winbtns">
      <button aria-label="最小化"><svg width="12" height="12"><path d="M0 5.500h12" stroke="#999"/></svg></button>
      <button aria-label="还原"><svg width="12" height="12"><path d="M.5 2.500h9v9h-9zM2.500 2V.5h9v9H10" fill="none" stroke="#999"/></svg></button>
      <button aria-label="关闭"><svg width="12" height="12"><path d="M0 0l12 12M12 0L0 12" stroke="#888"/></svg></button>
    </div>
  </header>

  <div class="frame">
    <nav class="tabs">
      <button class="file">文件<span class="tri white"></span></button>
      <a href="#">主屏幕</a><a href="#">定义</a><a href="#">几何</a><a href="#">材料</a><a href="#">物理场</a><a href="#">网格</a><a href="#">研究</a><a href="#">结果</a><a href="#">开发工具</a>
      <a href="#" class="active">电场 (ewfd)</a>
      <button class="help" aria-label="帮助">?</button>
    </nav>

    <section class="ribbon">
      <div class="group g-plot">
        <div class="tools">
          <button class="big"><svg width="32" height="28"><use href="#i-plot"/></svg><span>绘制</span></button>
          <button class="big"><svg width="40" height="32"><use href="#i-plotin"/></svg><span>绘制于</span><span class="tri small"></span></button>
        </div>
        <div class="caption">绘制</div>
      </div>
      <div class="group g-add">
        <div class="tools">
          <div class="cmds">
            <button><svg width="16" height="16"><use href="#i-surface"/></svg>表面</button>
            <button><svg width="16" height="16"><use href="#i-line"/></svg>线</button>
            <button><svg width="16" height="16"><use href="#i-linearrow"/></svg>线上箭头</button>
            <button><svg width="16" height="16"><use href="#i-note"/></svg>标注</button>
            <button><svg width="16" height="16"><use href="#i-height"/></svg>带高度的表面</button>
            <button><svg width="16" height="16"><use href="#i-contour"/></svg>等值线</button>
            <button class="wide"><svg width="16" height="16"><use href="#i-particle"/></svg>粒子轨迹</button>
            <button><svg width="16" height="16"><use href="#i-arrowsurf"/></svg>面上箭头</button>
            <button><svg width="16" height="16"><use href="#i-stream"/></svg>流线</button>
            <button class="wide"><svg width="16" height="16"><use href="#i-mesh"/></svg>网格</button>
          </div>
          <button class="big"><svg width="32" height="32"><use href="#i-surface"/></svg><span>更多绘图</span><span class="tri small"></span></button>
        </div>
        <div class="caption">添加绘图</div>
      </div>
      <div class="group g-attr">
        <div class="tools">
          <div class="cmds">
            <button disabled><svg width="16" height="16"><use href="#i-palette"/></svg>颜色表达式</button>
            <button disabled><svg width="16" height="16"><use href="#i-filter"/></svg>过滤器</button>
            <button disabled><svg width="16" height="16"><use href="#i-deform"/></svg>变形</button>
            <button disabled><svg width="16" height="16"><use href="#i-pick"/></svg>选择</button>
            <button disabled><svg width="16" height="16"><use href="#i-height"/></svg>高度表达式</button>
            <button disabled><svg width="16" height="16"><use href="#i-expr"/></svg>导出表达式</button>
          </div>
        </div>
        <div class="caption">属性</div>
      </div>
      <div class="group g-sel">
        <div class="tools">
          <div class="cmds">
            <button class="on"><svg width="16" height="16"><use href="#i-calc"/></svg>计算</button>
            <button><svg width="16" height="16"><use href="#i-cutstart"/></svg>截线起点</button>
            <button><svg width="16" height="16"><use href="#i-cutend"/></svg>截线终点</button>
          </div>
        </div>
        <div class="caption">选择</div>
      </div>
      <div class="group g-exp">
        <div class="tools">
          <button class="big"><svg width="38" height="32"><use href="#i-images"/></svg><span>二维图像</span></button>
          <button class="big"><svg width="38" height="26"><use href="#i-film"/></svg><span>动画</span><span class="tri small"></span></button>
        </div>
        <div class="caption">导出</div>
      </div>
    </section>

    <main class="work">
      <section class="panel model">
        <div class="phead"><h2>模型开发器</h2><span class="tri pale"></span><svg class="pin pale" width="10" height="14"><use href="#i-pin"/></svg></div>
        <div class="mtools">
          <button class="blue" aria-label="后退"><svg width="14" height="14"><use href="#i-left"/></svg></button>
          <button aria-label="前进"><svg width="14" height="14"><use href="#i-right"/></svg></button>
          <button aria-label="上移"><svg width="14" height="14"><use href="#i-up"/></svg></button>
          <button aria-label="下移"><svg width="14" height="14"><use href="#i-down"/></svg></button>
          <button aria-label="显示"><svg width="18" height="16"><use href="#i-eye"/></svg></button>
          <button class="drop" aria-label="显示选项"><span class="tri"></span></button>
          <button aria-label="全部折叠"><svg width="20" height="16"><use href="#i-collapse"/></svg></button>
          <button aria-label="全部展开"><svg width="20" height="16"><use href="#i-expand"/></svg></button>
          <button aria-label="节点标签"><svg width="18" height="16"><use href="#i-cols"/></svg></button>
          <button class="drop" aria-label="节点选项"><span class="tri"></span></button>
        </div>
        <div class="treebox">
          <ul class="tree">
            <li class="l3"><span class="tw"></span><svg><use href="#t-sys"/></svg>边界坐标系 1<i>(sys1)</i></li>
            <li class="l3"><span class="tw shut"></span><svg><use href="#t-view"/></svg>视图 1</li>
            <li class="l2"><span class="tw open"></span><svg><use href="#t-geom"/></svg>几何 1</li>
            <li class="l3"><span class="tw"></span><svg><use href="#t-circle"/></svg>圆 1<i>(c1)</i></li>
            <li class="l3"><span class="tw"></span><svg><use href="#t-circle"/></svg>圆 2<i>(c2)</i></li>
            <li class="l3"><span class="tw"></span><svg><use href="#t-array"/></svg>阵列 1<i>(arr1)</i></li>
            <li class="l3"><span class="tw"></span><svg><use href="#t-mirror"/></svg>镜像 1<i>(mir1)</i></li>
            <li class="l3"><span class="tw"></span><svg><use href="#t-move"/></svg>移动 1<i>(mov1)</i></li>
            <li class="l3"><span class="tw"></span><svg><use href="#t-move"/></svg>移动 2<i>(mov2)</i></li>
            <li class="l3"><span class="tw"></span><svg><use href="#t-move"/></svg>移动 3<i>(mov3)</i></li>
            <li class="l3"><span class="tw"></span><svg><use href="#t-move"/></svg>移动 4<i>(mov4)</i></li>
            <li class="l3"><span class="tw"></span><svg><use href="#t-move"/></svg>移动 5<i>(mov5)</i></li>
            <li class="l3"><span class="tw"></span><svg><use href="#t-move"/></svg>移动 6<i>(mov6)</i></li>
            <li class="l3"><span class="tw"></span><svg><use href="#t-delete"/></svg>删除实体 1<i>(del1)</i></li>
            <li class="l3"><span class="tw"></span><svg><use href="#t-circle"/></svg>圆 3<i>(c3)</i></li>
            <li class="l3"><span class="tw"></span><svg><use href="#t-union"/></svg>形成联合体<i>(fin)</i></li>
            <li class="l2"><span class="tw open"></span><svg><use href="#t-mat"/></svg>材料</li>
            <li class="l3"><span class="tw shut"></span><svg><use href="#t-mat"/></svg>包层<i>(mat1)</i></li>
            <li class="l3"><span class="tw shut"></span><svg><use href="#t-mat"/></svg>空气<i>(mat2)</i></li>
            <li class="l2"><span class="tw open"></span><svg><use href="#t-wave"/></svg>电磁波，频域<i>(ewfd)</i></li>
            <li class="l3"><span class="tw"></span><svg><use href="#t-domain"/></svg>波动方程，电 1</li>
            <li class="l3"><span class="tw"></span><svg><use href="#t-pec"/></svg>理想电导体 1</li>
            <li class="l3"><span class="tw"></span><svg><use href="#t-domain"/></svg>初始值 1</li>
            <li class="l2"><span class="tw"></span><svg><use href="#t-mesh"/></svg>网格 1</li>
            <li class="l1"><span class="tw open"></span><svg><use href="#t-study"/></svg>研究 1</li>
            <li class="l2"><span class="tw"></span><svg><use href="#t-sweep"/></svg>参数化扫描</li>
            <li class="l2 step"><span class="tw"></span><svg><use href="#t-mode"/></svg>步骤 1: 模式分析</li>
            <li class="l2"><span class="tw shut"></span><svg><use href="#t-solver"/></svg>求解器配置</li>
            <li class="l2"><span class="tw shut"></span><svg><use href="#t-job"/></svg>作业配置</li>
            <li class="l1"><span class="tw open"></span><svg><use href="#t-results"/></svg>结果</li>
            <li class="l2"><span class="tw shut"></span><svg><use href="#t-data"/></svg>数据集</li>
            <li class="l2"><span class="tw"></span><svg viewBox="0 0 20 20"><text class="tiny pinktxt" x="2" y="9">8.85</text><text class="tiny pinktxt" x="2" y="17">e-12</text></svg>派生值</li>
            <li class="l2"><span class="tw shut"></span><svg><use href="#t-table"/></svg>表格</li>
            <li class="l2 selected"><span class="tw shut"></span><svg><use href="#t-surface"/></svg>电场 (ewfd)</li>
            <li class="l2"><span class="tw"></span><svg><use href="#t-export"/></svg>导出</li>
          </ul>
          <div class="vbar"><span class="chev up"></span><span class="thumb"></span><span class="chev down"></span></div>
        </div>
      </section>

      <section class="panel settings">
        <div class="phead"><h2>设置</h2><span class="tri dark"></span><svg class="pin dark" width="10" height="14"><use href="#i-pin"/></svg></div>
        <div class="subtitle">二维绘图组</div>
        <div class="actions">
          <button class="plotbtn"><svg width="16" height="16"><use href="#i-plots"/></svg>绘制</button>
          <button aria-label="第一个"><svg width="20" height="14"><use href="#i-first"/></svg></button>
          <button aria-label="上一个"><svg width="18" height="14"><use href="#i-prev"/></svg></button>
          <button aria-label="下一个"><svg width="18" height="14"><use href="#i-next"/></svg></button>
          <button aria-label="最后一个"><svg width="20" height="14"><use href="#i-last"/></svg></button>
        </div>
        <div class="scroller">
          <form class="form">
            <div class="rows first">
              <div class="row w-s"><label for="tag">标签:</label><input id="tag" type="text" class="text" value="电场 (ewfd)"><button type="button" class="sq" aria-label="转到"><svg width="20" height="20"><use href="#i-goto"/></svg></button></div>
            </div>
            <h3><button type="button"><span class="sec open"></span>数据</button></h3>
            <div class="rows">
              <div class="row w-l"><label for="ds">数据集:</label><span class="sel"><select id="ds"><option>研究 1/参数化解 1 (sol2)</option></select></span><button type="button" class="sq" aria-label="转到源"><svg width="20" height="20"><use href="#i-source"/></svg></button></div>
              <div class="row w-l"><label for="pv">参数值 (para):</label><span class="sel"><select id="pv"><option>0.1</option></select></span></div>
              <div class="row w-l"><label for="ri">有效模式折射率:</label><span class="sel"><select id="ri"><option>1.4482</option></select></span></div>
            </div>
            <h3><button type="button"><span class="sec shut"></span>标题</button></h3>
            <h3 class="next"><button type="button"><span class="sec open"></span>绘图设置</button></h3>
            <div class="rows">
              <div class="row w-m"><label for="vw">视图:</label><span class="sel"><select id="vw"><option>自动</option></select></span><button type="button" class="sq" aria-label="转到源"><svg width="20" height="20"><use href="#i-source"/></svg></button></div>
              <div class="row w-m"><label for="xl">x 轴标签:</label><input type="checkbox" id="xl"><input type="text" class="text off" aria-label="x 轴标签文本" disabled></div>
              <div class="row w-m"><label for="yl">y 轴标签:</label><input type="checkbox" id="yl"><input type="text" class="text off" aria-label="y 轴标签文本" disabled></div>
              <label class="check"><input type="checkbox">显示隐藏的实体</label>
              <label class="check"><input type="checkbox">将隐藏传播到较低维度</label>
            </div>
            <fieldset class="edges">
              <legend><label class="check"><input type="checkbox" checked>绘制数据集边</label></legend>
              <div class="row w-c"><label for="cl">颜色:</label><span class="sel"><select id="cl"><option>黑色</option></select></span></div>
              <div class="row w-c"><label for="fr">坐标系:</label><span class="sel"><select id="fr"><option>空间&nbsp; (x, y, z)</option></select></span></div>
            </fieldset>
            <h3><button type="button"><span class="sec open"></span>颜色图例</button></h3>
            <fieldset class="legend">
              <legend><label class="check"><input type="checkbox" checked>显示图例</label></legend>
              <label class="check inner"><input type="checkbox">显示最大值和最小值</label>
              <label class="check inner"><input type="checkbox">显示单位</label>
              <div class="row w-p"><label for="ps">位置:</label><span class="sel focus"><select id="ps"><option>右</option></select></span></div>
              <div class="row w-p"><label for="tc">文本颜色:</label><span class="sel"><select id="tc"><option>黑色</option></select></span></div>
            </fieldset>
          </form>
          <div class="vbar"><span class="chev up"></span><span class="thumb"></span><span class="chev down"></span></div>
        </div>
        <svg class="pointers" viewBox="0 0 620 420" aria-hidden="true">
          <path d="M200 234l16-11 1 5L450 171 220 236l-1 4zM196 275l19 2-3 4L392 403 209 288l-4 4z" fill="#f93a37"/>
        </svg>
      </section>

      <div class="right">
        <section class="panel graphics">
          <div class="tabstrip">
            <button class="tab active">图形</button>
            <button class="tab">收敛图 1<svg class="cl" width="12" height="12"><use href="#i-x"/></svg></button>
            <span class="grow"></span><span class="tri pale"></span><svg class="pin pale" width="10" height="14"><use href="#i-pin"/></svg>
          </div>
          <div class="gtools">
            <button aria-label="放大"><svg width="16" height="16"><use href="#i-zoomin"/></svg></button>
            <button aria-label="缩小"><svg width="16" height="16"><use href="#i-zoomout"/></svg></button>
            <button aria-label="框选缩放"><svg width="20" height="16"><use href="#i-zoombox"/></svg></button>
            <button aria-label="缩放到窗口大小"><svg width="20" height="20"><use href="#i-fit"/></svg></button>
            <span class="bar"></span>
            <button aria-label="视图"><svg width="20" height="16"><use href="#i-axes"/></svg></button>
            <button class="drop" aria-label="视图选项"><span class="tri"></span></button>
            <button class="lead" aria-label="显示栅格"><svg width="22" height="22"><use href="#i-gridon"/></svg></button>
            <button aria-label="显示图例"><svg width="22" height="22"><use href="#i-legendon"/></svg></button>
            <span class="bar"></span>
            <button aria-label="图像快照"><svg width="16" height="14"><use href="#i-camera"/></svg></button>
            <button aria-label="打印"><svg width="16" height="18"><use href="#i-print"/></svg></button>
          </div>
          <svg class="plot" viewBox="0 0 843 529" role="img" aria-label="表面: 电场模 (V/m)">
            <defs>
              <radialGradient id="core"><stop offset="0" stop-color="#f00"/><stop offset=".2" stop-color="#ff1400"/><stop offset=".45" stop-color="#ff7800"/><stop offset=".65" stop-color="#fff000"/><stop offset=".8" stop-color="#a8ff58"/><stop offset=".92" stop-color="#40ffc0"/><stop offset="1" stop-color="#00f6ff"/></radialGradient>
              <radialGradient id="halo"><stop offset="0" stop-color="#00f6ff"/><stop offset=".72" stop-color="#00f0ff"/><stop offset=".82" stop-color="#0090ff" stop-opacity=".8"/><stop offset="1" stop-color="#0000ff" stop-opacity="0"/></radialGradient>
              <radialGradient id="lobe"><stop offset="0" stop-color="#00d0ff"/><stop offset=".35" stop-color="#0080ff" stop-opacity=".7"/><stop offset=".7" stop-color="#0038ff" stop-opacity=".4"/><stop offset="1" stop-color="#0000ff" stop-opacity="0"/></radialGradient>
              <linearGradient id="rainbow" x1="0" x2="0" y1="0" y2="1"><stop offset="0" stop-color="#f00"/><stop offset=".333" stop-color="#ff0"/><stop offset=".5" stop-color="#80ff80"/><stop offset=".667" stop-color="#0ff"/><stop offset="1" stop-color="#00f"/></linearGradient>
              <circle id="hole" r="18" fill="#00f" stroke="#000"/>
              <ellipse id="ray" cy="-37" rx="22" ry="40" fill="url(#lobe)"/>
            </defs>
            <text x="19" y="32">para(1)=0.1</text><text x="118" y="32">有效模式折射率=1.4482</text>
            <text x="328" y="32">表面: 电场模 (V/m)</text>
            <text x="1" y="56">×10</text><text class="sup" x="34" y="50">−5</text>
            <text x="2" y="74">m</text>
            <g transform="translate(393 273)">
              <path class="axis" d="M-335-230H335V230H-335z"/>
              <path class="axis" d="M-312-230v7M-234-230v7M-156-230v7M-78-230v7M0-230v7M78-230v7M156-230v7M234-230v7M312-230v7M-312 230v-7M-234 230v-7M-156 230v-7M-78 230v-7M0 230v-7M78 230v-7M156 230v-7M234 230v-7M312 230v-7"/>
              <path class="axis" d="M-335-195h7M-335-156h7M-335-117h7M-335-78h7M-335-39h7M-335 0h7M-335 39h7M-335 78h7M-335 117h7M-335 156h7M-335 195h7M335-195h-7M335-156h-7M335-117h-7M335-78h-7M335-39h-7M335 0h-7M335 39h-7M335 78h-7M335 117h-7M335 156h-7M335 195h-7"/>
              <g text-anchor="end"><text x="-341" y="-151">4</text><text x="-341" y="-112">3</text><text x="-341" y="-73">2</text><text x="-341" y="-34">1</text><text x="-341" y="5">0</text><text x="-341" y="44">-1</text><text x="-341" y="83">-2</text><text x="-341" y="122">-3</text><text x="-341" y="161">-4</text><text x="-341" y="200">-5</text></g>
              <g text-anchor="middle"><text x="-312" y="250">-8</text><text x="-234" y="250">-6</text><text x="-156" y="250">-4</text><text x="-78" y="250">-2</text><text x="0" y="250">0</text><text x="78" y="250">2</text><text x="156" y="250">4</text><text x="234" y="250">6</text></g>
              <text x="274" y="250">×10</text><text class="sup" x="307" y="244">−5</text><text x="324" y="250">m</text>
              <circle r="209" fill="#00f" stroke="#000"/>
              <use href="#ray"/><use href="#ray" transform="rotate(60)"/><use href="#ray" transform="rotate(120)"/><use href="#ray" transform="rotate(180)"/><use href="#ray" transform="rotate(240)"/><use href="#ray" transform="rotate(300)"/>
              <circle r="51" fill="url(#halo)"/>
              <g id="half">
                <use href="#hole" x="-151" y="-52"/><use href="#hole" x="-90" y="-52"/><use href="#hole" x="-30" y="-52"/><use href="#hole" x="30" y="-52"/><use href="#hole" x="90" y="-52"/><use href="#hole" x="151" y="-52"/>
                <use href="#hole" x="-121" y="-105"/><use href="#hole" x="-60" y="-105"/><use href="#hole" y="-105"/><use href="#hole" x="60" y="-105"/><use href="#hole" x="121" y="-105"/>
                <use href="#hole" x="-90" y="-157"/><use href="#hole" x="-30" y="-157"/><use href="#hole" x="30" y="-157"/><use href="#hole" x="90" y="-157"/>
              </g>
              <use href="#half" transform="rotate(180)"/>
              <use href="#hole" x="-181"/><use href="#hole" x="-121"/><use href="#hole" x="-60"/><use href="#hole" x="60"/><use href="#hole" x="121"/><use href="#hole" x="181"/>
              <circle r="36.500" fill="url(#core)" stroke="#000"/>
            </g>
            <rect x="754.500" y="81.500" width="19" height="415" fill="url(#rainbow)" stroke="#222"/>
            <path d="M755 91h4M755 149h4M755 207h4M755 265h4M755 322h4M755 380h4M755 438h4M773 91h-4M773 149h-4M773 207h-4M773 265h-4M773 322h-4M773 380h-4M773 438h-4" stroke="#222"/>
            <text x="782" y="96">700</text><text x="782" y="153">600</text><text x="782" y="211">500</text><text x="782" y="269">400</text><text x="782" y="327">300</text><text x="782" y="385">200</text><text x="782" y="443">100</text>
            <use href="#i-logo" x="809" y="6" width="28" height="24"/>
          </svg>
        </section>

        <section class="panel output">
          <div class="tabstrip">
            <button class="tab">消息<svg class="cl" width="12" height="12"><use href="#i-x"/></svg></button>
            <button class="tab">进度</button>
            <button class="tab">日志</button>
            <button class="tab active">Evaluation 2D<svg class="cl" width="12" height="12"><use href="#i-x"/></svg></button>
            <span class="grow"></span><span class="tri pale"></span><svg class="pin pale" width="10" height="14"><use href="#i-pin"/></svg>
          </div>
          <div class="gtools">
            <button aria-label="精度"><svg width="20" height="20"><use href="#i-precision"/></svg></button>
            <span class="bar"></span>
            <button><svg width="24" height="22"><text class="tiny" x="2" y="8">8.85</text><text class="tiny" x="2" y="18">e-12</text></svg></button>
            <button><svg width="24" height="24"><rect x="2" y="2" width="20" height="20" rx="2" fill="url(#g-pressed)" stroke="#234f94"/><text class="auto" x="3" y="15">AUTO</text></svg></button>
            <button><svg width="24" height="22"><text class="tiny" x="5" y="8">8.5</text><text class="tiny" x="4" y="18">e-1</text></svg></button>
            <button><svg width="24" height="22"><text class="tiny" x="4" y="8">850</text><text class="tiny" x="4" y="18">e-3</text></svg></button>
            <button><svg width="24" height="22"><text class="tiny" x="2" y="14">0.85</text></svg></button>
            <span class="bar"></span>
            <button aria-label="完整表格"><svg width="22" height="22"><use href="#i-tableon"/></svg></button>
            <button aria-label="极坐标"><svg width="20" height="20"><use href="#i-polar"/></svg></button>
            <span class="bar"></span>
            <button aria-label="清除"><svg width="20" height="20"><use href="#i-broom"/></svg></button>
            <button aria-label="删除"><svg width="18" height="18"><use href="#i-trash"/></svg></button>
            <button aria-label="表图"><svg width="20" height="20"><use href="#i-tgraph"/></svg></button>
            <button aria-label="表面"><svg width="16" height="16"><use href="#i-surface"/></svg></button>
            <button aria-label="复制表格"><svg width="20" height="20"><use href="#i-tcopy"/></svg></button>
            <button aria-label="导出"><svg width="20" height="20"><use href="#i-texport"/></svg></button>
            <button aria-label="显示表格"><svg width="20" height="20"><use href="#t-table"/></svg></button>
            <button class="drop" aria-label="更多"><span class="tri"></span></button>
          </div>
          <div class="tablebox">
            <table>
              <colgroup><col class="c1"><col class="c2"><col class="c2"><col></colgroup>
              <thead><tr><th>x</th><th>y</th><th>Value</th><th></th></tr></thead>
              <tbody><tr><td>-2.0979E-6</td><td>8.7518E-7</td><td>6.4540E-4</td><td></td></tr></tbody>
            </table>
          </div>
        </section>
      </div>
    </main>

    <footer class="status"><span>1.6 GB | 2.07 GB</span><span class="mark">CSDN @Leisureconfused</span></footer>
  </div>
</div>
</body>
</html>
```
FILE: styles.css
```css
* { box-sizing: border-box; }

body {
  margin: 0;
  font: 15px/20px "Noto Sans", "Noto Sans CJK SC", sans-serif;
  color: #000;
  background: #fff;
}

button, input, select { font: inherit; color: inherit; }
button {
  display: flex;
  align-items: center;
  justify-content: center;
  border: 0;
  padding: 0;
  background: none;
}
h1, h2, h3, ul { margin: 0; padding: 0; font-weight: 400; }
svg { display: block; flex: none; }
a { text-decoration: none; }
.sprite { position: absolute; width: 0; height: 0; }

/* small shared pieces */
.tri {
  flex: none;
  width: 12px;
  height: 6px;
  background: #222;
  clip-path: polygon(0 0, 100% 0, 50% 100%);
}
.tri.small { width: 8px; height: 5px; }
.tri.white { width: 10px; height: 8px; background: #fff; }
.tri.pale { background: #ccd3de; }
.tri.dark { background: #555; }
.pin.pale { color: #ccd3de; }
.pin.dark { color: #555; }
.bar { flex: none; width: 1px; height: 20px; background: #c4c8ce; }

/* window */
.window {
  display: flex;
  flex-direction: column;
  height: 100vh;
  border-top: 1px solid #a9a9a9;
  border-bottom: 1px solid #a9a9a9;
}
.titlebar {
  display: flex;
  height: 32px;
  border: solid #a9a9a9;
  border-width: 0 1px;
}
.app-logo { margin: 9px 12px 0 8px; }
.quick { display: flex; align-items: center; padding-top: 7px; }
.quick button { width: 29px; height: 20px; }
.quick .bar { height: 18px; margin: 0 3px 0 0; background: #999; }
.quick button + .bar { margin-left: 5px; }
.quick .drop { width: 14px; }
.title {
  flex: 1;
  padding: 6px 0 0 122px;
  font-size: 16px;
  line-height: 24px;
  text-align: center;
  white-space: nowrap;
}
.winbtns { display: flex; padding-right: 9px; }
.winbtns button { width: 58px; height: 32px; }

.frame {
  flex: 1;
  min-height: 0;
  display: flex;
  flex-direction: column;
  border: solid #a9a9a9;
  border-width: 0 4px;
}

/* ribbon tabs */
.tabs {
  flex: none;
  display: flex;
  gap: 1px;
  height: 30px;
  margin: 4px 9px 0;
  background: #f9fbff;
}
.tabs a { padding: 7px 16px 0; color: #2b579a; white-space: nowrap; }
.tabs a.active {
  position: relative;
  height: 30px;
  margin: 1px 0 0 3px;
  padding: 5px 16px 0 12px;
  border: 1px solid #b9cbe0;
  border-bottom: 0;
  border-radius: 4px 4px 0 0;
  background: #fff;
}
.file {
  width: 69px;
  height: 29px;
  gap: 4px;
  border: 1px solid #1f4a8a;
  background: #2b579a;
  color: #fff;
}
.help {
  width: 14px;
  height: 14px;
  margin: 8px 6px 0 auto;
  background: #4a7fb8;
  color: #fff;
  font-size: 11px;
  line-height: 14px;
  font-weight: 700;
}

/* ribbon */
.ribbon {
  flex: none;
  display: flex;
  height: 114px;
  margin: 0 9px;
  border: 1px solid #b9cbe0;
  background: linear-gradient(#fff 30%, #fbfcff);
}
.group { display: flex; flex-direction: column; position: relative; }
.group::after {
  content: "";
  position: absolute;
  right: 0;
  top: 8px;
  bottom: 10px;
  width: 1px;
  background: #b9cbe0;
}
.tools { display: flex; height: 88px; padding-top: 3px; }
.caption { text-align: center; color: #999; }
.cmds { display: grid; grid-auto-rows: 28px; }
.cmds button { justify-content: flex-start; gap: 4px; white-space: nowrap; }
.cmds button:disabled { color: #aaa; }
.cmds button:disabled svg { opacity: .4; }
.cmds .wide { grid-column: span 2; }
.big {
  display: grid;
  grid-template-rows: 38px 26px 10px;
  justify-items: center;
  align-items: center;
  align-content: start;
  padding-top: 3px;
}
.big span { white-space: nowrap; }
.g-plot { width: 125px; }
.g-plot .tools { padding-left: 9px; }
.g-plot .big { width: 50px; }
.g-plot .big + .big { width: 60px; }
.g-add { width: 430px; }
.g-add .tools { padding-left: 14px; }
.g-add .cmds { grid-template-columns: 120px 76px 90px 52px; }
.g-add .big { width: 72px; }
.g-attr { width: 228px; }
.g-attr .tools { padding-left: 14px; }
.g-attr .cmds { grid-template-columns: 107px 100px; }
.g-sel { width: 106px; }
.g-sel .tools { padding-left: 9px; }
.g-sel .cmds button { padding: 0 5px; }
.g-sel .on {
  width: 60px;
  height: 25px;
  margin-top: 2px;
  border: 1px solid #2f97e8;
  background: #a2d1fa;
}
.g-exp { width: 138px; }
.g-exp .tools { padding-left: 10px; }
.g-exp .big { width: 64px; }
.g-exp .big + .big { width: 54px; }

/* work area */
.work {
  flex: 1;
  min-height: 0;
  display: grid;
  grid-template-columns: minmax(0, 414fr) minmax(0, 621fr) minmax(0, 845fr);
  gap: 6px;
  margin: 0 4px;
  padding: 5px;
  background: #fafbff;
}
.panel {
  display: flex;
  flex-direction: column;
  min-width: 0;
  min-height: 0;
  border: 1px solid #d0d3d9;
}
.phead { flex: none; display: flex; align-items: center; gap: 9px; height: 42px; padding: 0 4px 0 9px; }
.phead h2 { flex: 1; padding-top: 2px; font-size: 27px; font-weight: 300; line-height: 40px; }
.model h2 { color: #2b579a; }
.settings h2, .subtitle { color: #1e8fe8; }
.phead .tri, .tabstrip .tri { width: 10px; height: 5px; }

.mtools { flex: none; display: flex; align-items: center; height: 20px; padding-left: 2px; color: #aaa; }
.mtools button { width: 29px; height: 20px; }
.mtools .blue { color: #2f7fd0; }
.mtools .drop { width: 16px; }
.mtools .drop + button { margin-left: 6px; }
.mtools .tri { width: 10px; }

.treebox {
  flex: 1;
  min-height: 0;
  display: flex;
  margin: 6px 5px 11px;
  border: 1px solid #c8cbd0;
  background: #fff;
  overflow: hidden;
}
.tree { flex: 1; list-style: none; }
.tree li { display: flex; align-items: center; height: 22px; white-space: nowrap; }
.tree li svg { width: 20px; height: 20px; margin: 0 7px 0 6px; }
.tree i { padding-left: 9px; }
.tree .l1 { padding-left: 28px; }
.tree .l2 { padding-left: 53px; }
.tree .l3 { padding-left: 78px; }
.tree .step svg { margin-right: 15px; }
.tree .selected { background: #dadadc; }
.tw { display: flex; justify-content: center; width: 16px; }
.tw::before { content: ""; }
.tw.open::before { width: 9px; height: 9px; background: #222; clip-path: polygon(100% 0, 100% 100%, 0 100%); }
.tw.shut { padding-left: 3px; }
.tw.shut::before, .sec.shut::before {
  width: 7px;
  height: 12px;
  background: #777;
  clip-path: polygon(evenodd, 0 0, 100% 50%, 0 100%, 0 0, 1px 2px, 1px 10px, 5px 50%, 1px 2px);
}

.vbar {
  flex: none;
  display: grid;
  justify-items: center;
  width: 21px;
  background: #f0f0f0;
}
.thumb { width: 100%; background: #cdcdcd; }
.chev { width: 8px; height: 8px; border: solid #999; border-width: 2px 0 0 2px; transform: rotate(45deg); }
.chev.up { margin-top: 9px; }
.chev.down { transform: rotate(225deg); margin-bottom: 8px; align-self: end; }
.treebox .vbar { grid-template-rows: 152fr 556fr 54fr; }
.scroller .vbar { grid-template-rows: 21fr 630fr 95fr; margin-right: 1px; }

/* settings */
.settings { position: relative; }
.subtitle { flex: none; height: 26px; padding-left: 9px; font-size: 19px; font-weight: 300; line-height: 26px; }
.actions { flex: none; display: flex; height: 24px; margin-bottom: 4px; padding-left: 9px; }
.actions button { width: 29px; }
.actions .plotbtn { width: auto; gap: 7px; margin-right: 5px; }
.scroller { flex: 1; min-height: 0; display: flex; overflow: hidden; }
.form { flex: 1; min-width: 0; overflow: hidden; }
.form h3 { margin-top: 14px; background: #dee8f4; }
.form h3.next { margin-top: 3px; }
.form h3 button { width: 100%; height: 32px; justify-content: flex-start; gap: 13px; padding-left: 6px; font-size: 17px; }
.sec { display: flex; justify-content: center; width: 13px; }
.sec::before { content: ""; }
.sec.open::before { width: 11px; height: 7px; background: #444; clip-path: polygon(0 0, 100% 0, 50% 100%); }
.rows { display: flex; flex-direction: column; gap: 8px; padding: 12px 7px 0 6px; }
.rows.first + h3 { margin-top: 11px; }
.row { display: flex; align-items: center; }
.row label { flex: none; white-space: nowrap; }
.w-s label { width: 46px; }
.w-l label { width: 122px; }
.w-m label { width: 75px; }
.w-c label { width: 62px; }
.w-p label { width: 76px; }
.text {
  flex: 1;
  min-width: 0;
  height: 24px;
  padding: 0 2px;
  border: 2px solid #d4d4d4;
  background: #fff;
}
.text.off { margin-left: 19px; border-color: #e6e8ea; background: #fafbff; }
.sel { flex: 1; display: flex; position: relative; }
.sel select {
  appearance: none;
  width: 100%;
  height: 26px;
  padding: 0 24px 0 13px;
  border: 2px solid #9a9a9a;
  border-radius: 3px;
  background: linear-gradient(#f1f1f1, #e5e5e5);
}
.sel.focus select { border-color: #6cb4f0; background: #cce6fb; }
.sel::after {
  content: "";
  position: absolute;
  right: 5px;
  top: 12px;
  width: 9px;
  height: 6px;
  background: #000;
  clip-path: polygon(0 0, 100% 0, 50% 100%);
}
.sq { width: 25px; height: 28px; margin: 0 -1px 0 10px; border: 2px solid #999; border-radius: 3px; background: #efefef; }
input[type="checkbox"] {
  appearance: none;
  flex: none;
  display: grid;
  place-items: center;
  width: 18px;
  height: 16px;
  margin: 0;
  border: 1px solid #666;
  background: #fff;
}
input[type="checkbox"]:checked::before {
  content: "";
  width: 12px;
  height: 12px;
  background: #222;
  clip-path: polygon(0 55%, 18% 42%, 38% 66%, 84% 0, 100% 10%, 42% 100%);
}
.check { display: flex; align-items: center; gap: 6px; height: 18px; }
.rows .check, .check.inner { padding-left: 1px; }
fieldset {
  display: flex;
  flex-direction: column;
  gap: 8px;
  min-width: 0;
  margin: 14px 8px 0 7px;
  padding: 7px 12px 9px;
  border: 1px solid #d3dde4;
  border-radius: 4px;
}
fieldset legend { margin-left: -5px; padding: 0 12px 0 10px; }
.edges + h3 { margin-top: 15px; }
fieldset.legend { margin-top: 18px; }
.pointers { position: absolute; left: 0; top: 0; width: 620px; height: 420px; pointer-events: none; }

/* right column */
.right { display: grid; grid-template-rows: minmax(0, 1fr) 234px; gap: 7px; min-width: 0; min-height: 0; }
.tabstrip {
  flex: none;
  display: flex;
  align-items: center;
  gap: 10px;
  height: 38px;
  padding: 6px 5px 0;
  border-bottom: 1px solid #d0d3d9;
}
.grow { flex: 1; }
.tab { height: 31px; gap: 10px; padding: 0 5px; background: #ebebeb; font-size: 17px; white-space: nowrap; }
.tab .cl { margin-right: 3px; color: #ccd6e0; }
.tab.active {
  height: 32px;
  margin-bottom: -1px;
  border: 1px solid #d0d3d9;
  border-bottom: 0;
  background: #fafbff;
  color: #2b579a;
}
.gtools { flex: none; display: flex; align-items: center; height: 35px; padding: 2px 0 0 2px; }
.gtools button { width: 29px; }
.gtools .bar { margin: 0 11px 0 8px; }
.gtools .drop { width: 18px; }
.gtools .lead { margin-left: 6px; }
.gtools .tri { width: 10px; }
.plot { flex: 1; min-height: 0; width: 100%; background: #fff; font: 15px "DejaVu Sans", "Noto Sans CJK SC", sans-serif; fill: #111; }
.plot .sup { font-size: 11px; }
.axis { fill: none; stroke: #808080; stroke-width: 2; }

.output .gtools { height: 39px; padding: 0 0 2px 7px; }
.tiny { font: 700 8px "DejaVu Sans", sans-serif; fill: #41719f; }
.tiny.pinktxt { font-size: 7px; fill: #c0447f; }
.auto { font: 700 6px "DejaVu Sans", sans-serif; fill: #234f94; }
.tablebox { flex: 1; margin: 0 12px 10px 11px; border: 1px solid #d0d3d9; background: #fcfdff; overflow: hidden; }
table { width: 100%; table-layout: fixed; border-collapse: collapse; font-size: 16px; white-space: nowrap; }
.c1 { width: 80px; }
.c2 { width: 75px; }
th {
  height: 33px;
  padding: 6px 6px 0;
  border: solid #d9dbde;
  border-width: 0 1px 1px 0;
  background: linear-gradient(#fff 42%, #f6f7f8 43%, #eff0f2);
  font-weight: 400;
  text-align: left;
}
td {
  height: 23px;
  padding: 0 0 0 1px;
  border: solid #a9a9a9;
  border-width: 0 1px 2px 0;
  background: #fff;
}
th:last-child, td:last-child { border-right: 0; }

/* status bar */
.status { flex: none; display: flex; align-items: center; justify-content: space-between; height: 40px; padding: 0 10px 0 1058px; background: #f0eceb; white-space: nowrap; }
.mark { padding-top: 6px; font-size: 19px; line-height: 24px; color: #8f8f8f; text-shadow: 1px 1px 1px #fff; }
```
